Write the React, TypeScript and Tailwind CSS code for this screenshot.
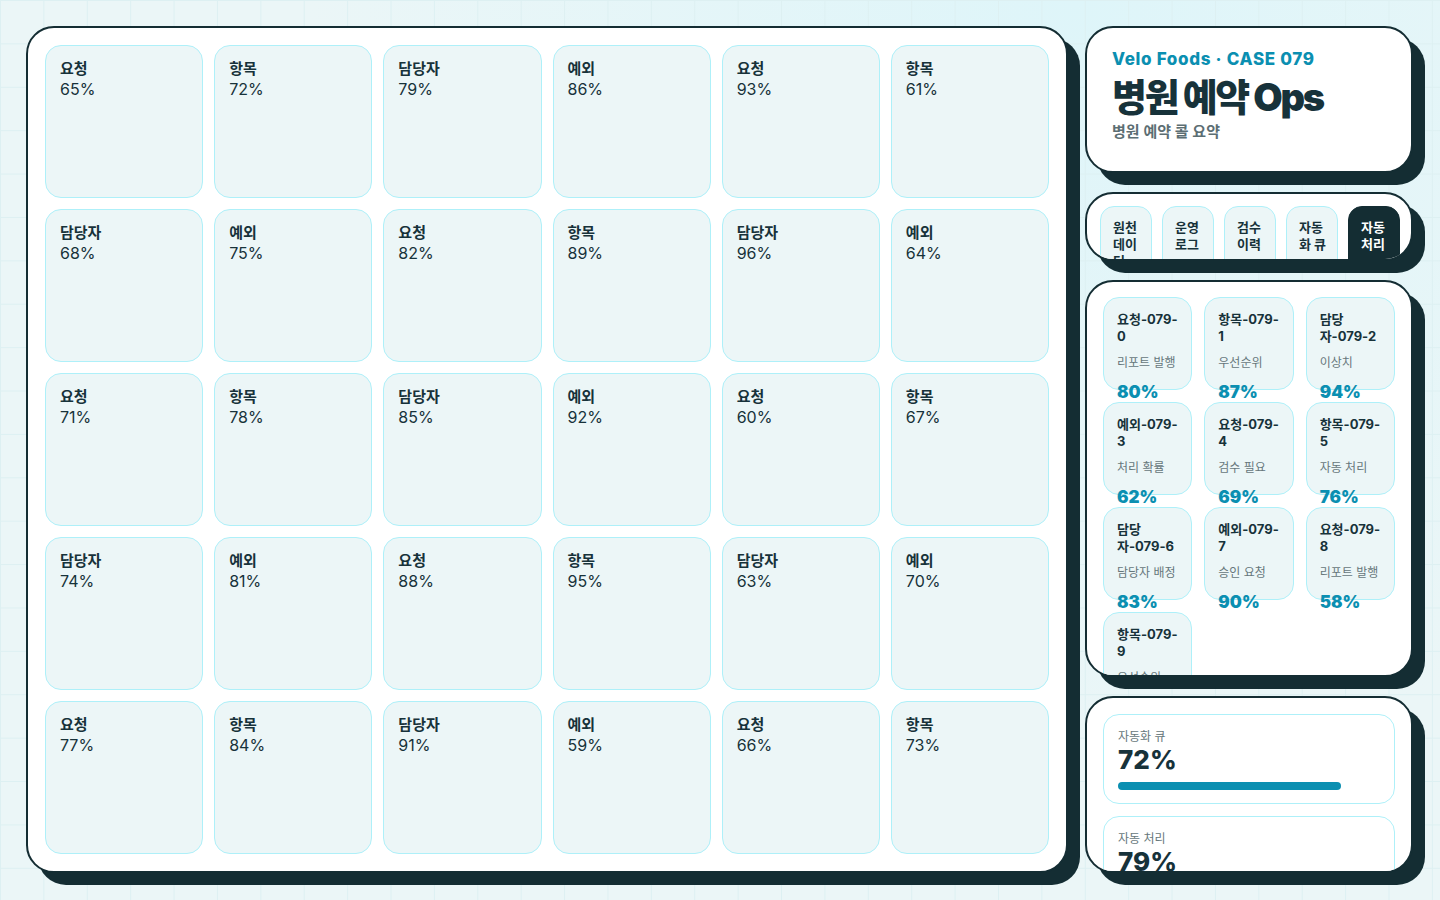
import React from "react";

const FONT = "font-['Inter','Noto_Sans_CJK_KR',sans-serif]";

const BOARD: { label: string; value: number }[] = [
    65, 72, 79, 86, 93, 61,
    68, 75, 82, 89, 96, 64,
    71, 78, 85, 92, 60, 67,
    74, 81, 88, 95, 63, 70,
    77, 84, 91, 59, 66, 73,
].map((value, i) => ({ label: ["요청", "항목", "담당자", "예외"][i % 4], value }));

const QUEUE = [
    { name: "요청-079-0", note: "리포트 발행", value: 80 },
    { name: "항목-079-1", note: "우선순위", value: 87 },
    { name: "담당자-079-2", note: "이상치", value: 94 },
    { name: "예외-079-3", note: "처리 확률", value: 62 },
    { name: "요청-079-4", note: "검수 필요", value: 69 },
    { name: "항목-079-5", note: "자동 처리", value: 76 },
    { name: "담당자-079-6", note: "담당자 배정", value: 83 },
    { name: "예외-079-7", note: "승인 요청", value: 90 },
    { name: "요청-079-8", note: "리포트 발행", value: 58 },
    { name: "항목-079-9", note: "우선순위", value: 65 },
];

const TABS = ["원천 데이터", "운영 로그", "검수 이력", "자동화 큐", "자동 처리"];

const METRICS = [
    { label: "자동화 큐", value: 72, bar: 85 },
    { label: "자동 처리", value: 79, bar: 90 },
];

function Card({ className, children }: { className?: string; children: React.ReactNode }) {
    return (
        <section
            className={`rounded-[28px] border-2 border-[#142d33] bg-white shadow-[12px_12px_0_#142d33] overflow-hidden ${className ?? ""}`}
        >
            {children}
        </section>
    );
}

export default function App() {
    return (
        <div className={`${FONT} h-screen w-full bg-[radial-gradient(circle_at_75%_0%,#def5f9,#ebf6f7_55%)] text-[#17323a]`}>
            <div className="h-full w-full flex gap-[17px] p-[26px] pb-[27px] bg-[linear-gradient(to_right,#ddf0f2_1px,transparent_1px),linear-gradient(to_bottom,#ddf0f2_1px,transparent_1px)] bg-[size:43.4px_43.4px]">

                {/* Board */}
                <section className="w-[1042px] h-full rounded-[28px] border-2 border-[#142d33] bg-white shadow-[12px_12px_0_#142d33] p-[17px]">
                    <div className="grid grid-cols-6 grid-rows-5 gap-[11px] h-full">
                        {BOARD.map((b, i) => (
                            <div
                                key={i}
                                className="rounded-[16px] border border-[#aef0f9] bg-[#ecf6f7] px-[14px] py-[13px]"
                            >
                                <div className="text-[15px] leading-[20px] font-bold">{b.label}</div>
                                <div className="text-[16px] leading-[21px]">{b.value}%</div>
                            </div>
                        ))}
                    </div>
                </section>

                {/* Right column */}
                <div className="w-[328px] h-full flex flex-col gap-[19px]">

                    <Card className="h-[147px] shrink-0 px-[25px] pt-[20px]">
                        <div className="text-[17px] leading-[22px] font-extrabold tracking-[0.04em] text-[#0b8fb1]">
                            Velo Foods · CASE 079
                        </div>
                        <h1 className="mt-[6px] text-[38px] leading-[42px] font-black tracking-[-0.06em]">
                            병원 예약 Ops
                        </h1>
                        <div className="mt-[3px] text-[15px] leading-[21px] font-semibold text-[#5c6e73]">
                            병원 예약 콜 요약
                        </div>
                    </Card>

                    <Card className="h-[69px] shrink-0 px-[13px] pt-[12px]">
                        <div className="flex gap-[10px]">
                            {TABS.map((t, i) => (
                                <div
                                    key={t}
                                    className={`w-[52px] shrink-0 rounded-[14px] border pl-[12px] pr-[8px] pt-[12px] pb-[10px] text-[13px] leading-[17px] font-bold ${i === TABS.length - 1 ? "bg-[#142d33] border-[#142d33] text-white" : "bg-[#ecf6f7] border-[#aef0f9]"}`}
                                >
                                    {t}
                                </div>
                            ))}
                        </div>
                    </Card>

                    <Card className="flex-1 min-h-0 px-[16px] pt-[15px]">
                        <div className="grid grid-cols-3 gap-[12px] auto-rows-[93px]">
                            {QUEUE.map((q) => (
                                <div
                                    key={q.name}
                                    className="rounded-[16px] border border-[#aef0f9] bg-[#ecf6f7] px-[13px] pt-[13px]"
                                >
                                    <div className="text-[13px] leading-[17px] font-bold">{q.name}</div>
                                    <div className="mt-[10px] text-[12px] leading-[16px] text-[#66777b]">{q.note}</div>
                                    <div className="mt-[11px] text-[17px] leading-[20px] font-black text-[#0b8fb1]">{q.value}%</div>
                                </div>
                            ))}
                        </div>
                    </Card>

                    <Card className="h-[177px] shrink-0 p-[16px]">
                        <div className="flex flex-col gap-[12px]">
                            {METRICS.map((m) => (
                                <div key={m.label} className="rounded-[16px] border border-[#aef0f9] bg-white px-[14px] pt-[14px] pb-[13px]">
                                    <div className="text-[12px] leading-[16px] text-[#66777b]">{m.label}</div>
                                    <div className="text-[26px] leading-[30px] font-extrabold">{m.value}%</div>
                                    <div className="mt-[7px] h-[8px] rounded-full">
                                        <div className="h-full rounded-full bg-[#0b8fb1]" style={{ width: `${m.bar}%` }} />
                                    </div>
                                </div>
                            ))}
                        </div>
                    </Card>

                </div>
            </div>
        </div>
    );
}
